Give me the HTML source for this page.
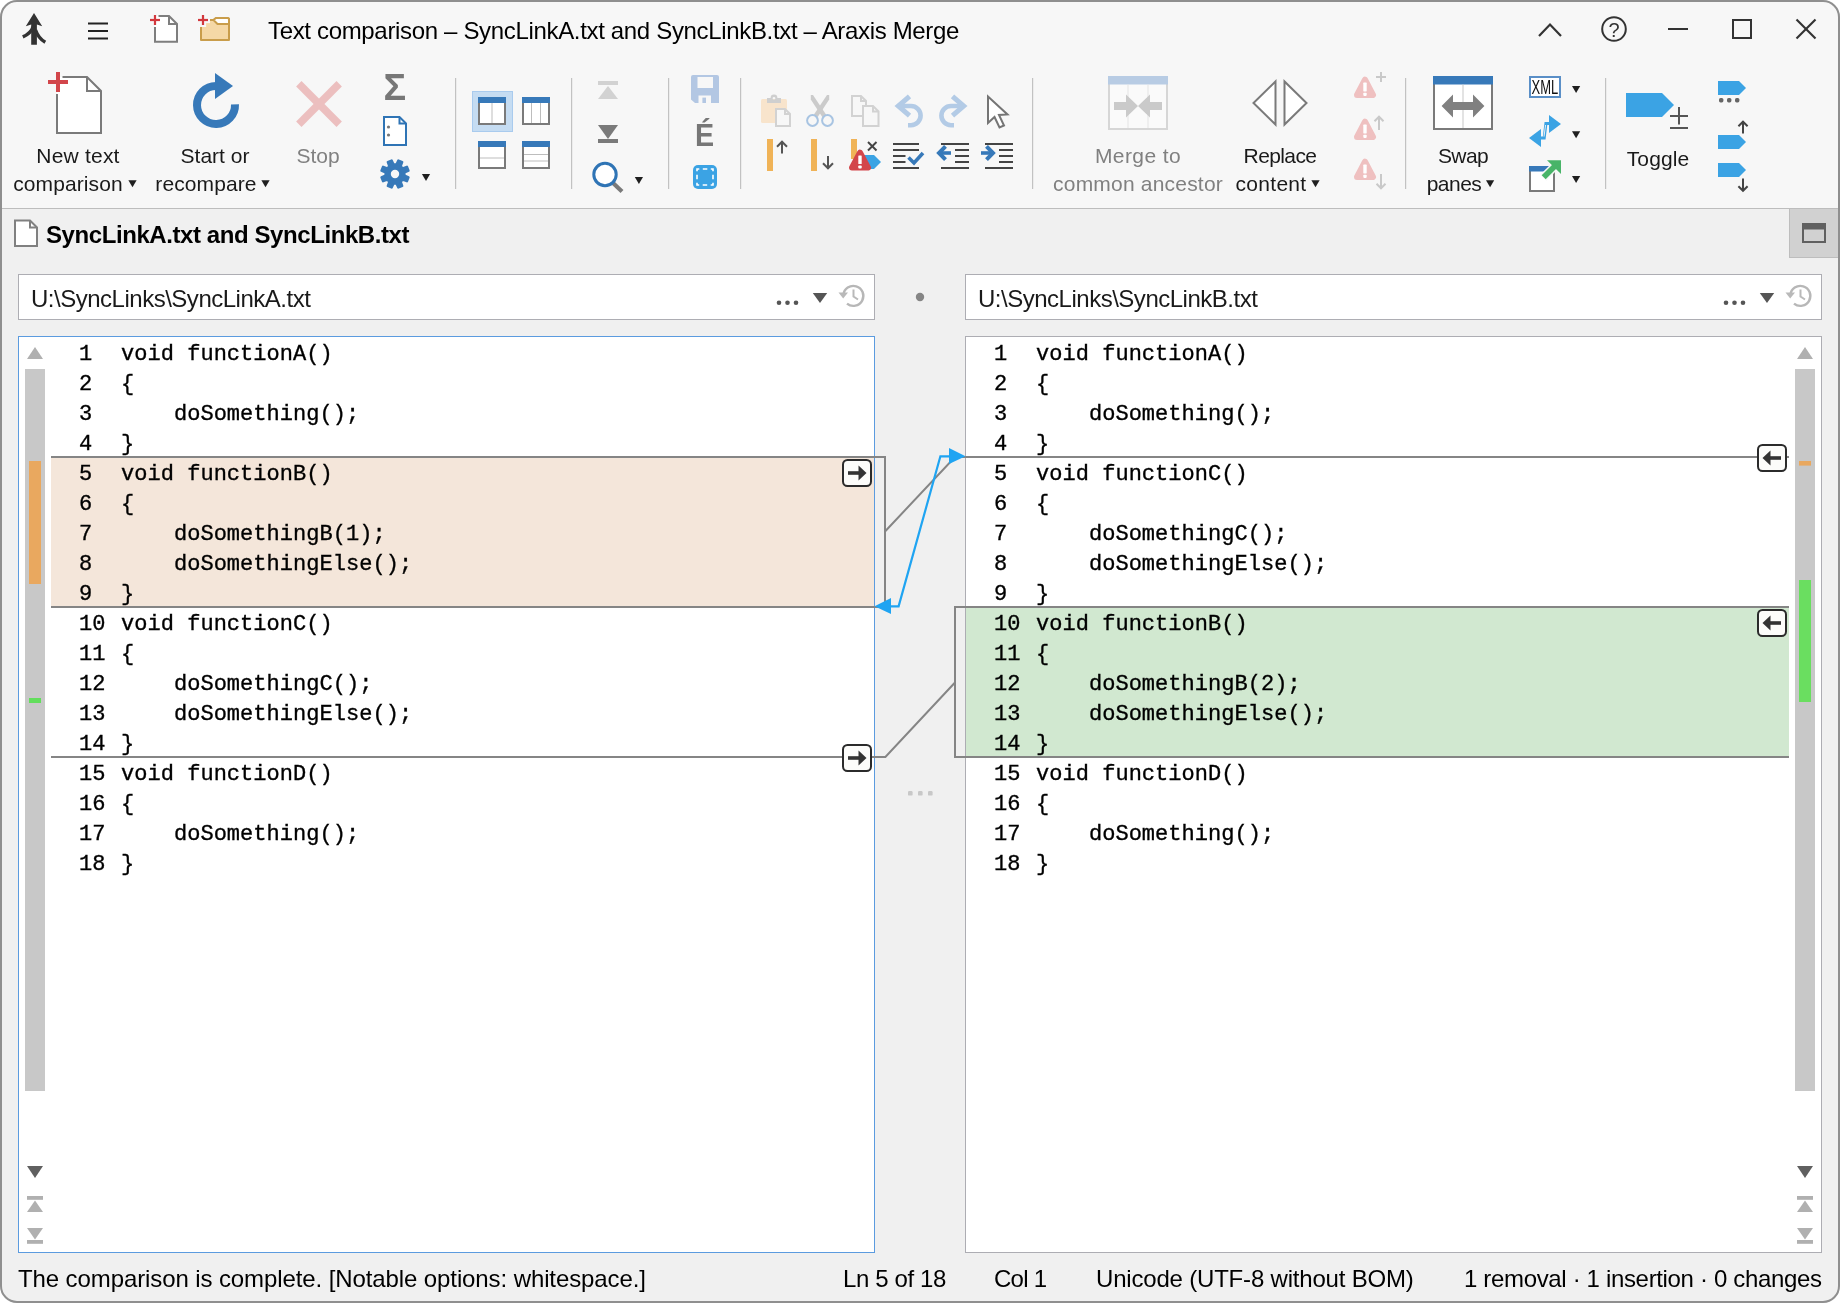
<!DOCTYPE html>
<html lang="en"><head><meta charset="utf-8"><title>Text comparison – SyncLinkA.txt and SyncLinkB.txt – Araxis Merge</title>
<style>
html,body{margin:0;padding:0;background:#fff;}
body{width:1840px;height:1303px;position:relative;overflow:hidden;font-family:"Liberation Sans", sans-serif;}
.a{position:absolute;}
.t{position:absolute;white-space:pre;font-family:"Liberation Sans", sans-serif;will-change:transform;}
.t.c{text-align:center;}
#top{left:0;top:0;width:1840px;height:208px;background:#f7f7f7;}
#topline{left:0;top:208px;width:1840px;height:1px;background:#bdbdbd;}
#main{left:0;top:209px;width:1840px;height:1094px;background:#f0f0f0;}
.path{background:#fff;border:1px solid #adadb3;box-sizing:border-box;height:46px;top:274px;width:857px;}
.pane{background:#fff;box-sizing:border-box;top:336px;width:857px;height:917px;overflow:hidden;}
#lp{left:18px;border:1px solid #5b9bdf;}
#rp{left:965px;border:1px solid #adadb3;}
.code{will-change:transform;position:absolute;font-family:"Liberation Mono", monospace;font-size:22px;line-height:30px;white-space:pre;color:#000;margin:0;letter-spacing:0.03px;-webkit-text-stroke:0.35px #000;}
.hl{position:absolute;height:148px;}
#frame{left:0;top:0;width:1840px;height:1303px;box-sizing:border-box;border:2px solid #8f8f8f;border-radius:17px;box-shadow:0 0 0 40px #fff;pointer-events:none;}
svg{position:absolute;left:0;top:0;overflow:visible;will-change:transform;}
svg text{font-family:"Liberation Sans", sans-serif;}
</style></head><body>

<div id="top" class="a"></div><div id="topline" class="a"></div><div id="main" class="a"></div>
<div class="t" style="left:268px;top:18.68px;font-size:24px;line-height:24px;letter-spacing:-0.333px;color:#000;font-weight:400;">Text comparison – SyncLinkA.txt and SyncLinkB.txt – Araxis Merge</div>
<div class="t c" style="left:-72px;width:300px;top:145.22px;font-size:21px;line-height:21px;letter-spacing:0.2px;color:#1a1a1a;">New text</div>
<div class="t c" style="left:-82px;width:300px;top:173.22px;font-size:21px;line-height:21px;letter-spacing:0.1px;color:#1a1a1a;">comparison</div>
<div class="t c" style="left:65px;width:300px;top:145.22px;font-size:21px;line-height:21px;letter-spacing:0px;color:#1a1a1a;">Start or</div>
<div class="t c" style="left:56px;width:300px;top:173.22px;font-size:21px;line-height:21px;letter-spacing:0.1px;color:#1a1a1a;">recompare</div>
<div class="t c" style="left:168px;width:300px;top:145.22px;font-size:21px;line-height:21px;letter-spacing:0px;color:#808080;">Stop</div>
<div class="t c" style="left:988px;width:300px;top:145.22px;font-size:21px;line-height:21px;letter-spacing:0.4px;color:#808080;">Merge to</div>
<div class="t c" style="left:988px;width:300px;top:173.22px;font-size:21px;line-height:21px;letter-spacing:0.2px;color:#808080;">common ancestor</div>
<div class="t c" style="left:1129.5px;width:300px;top:145.22px;font-size:21px;line-height:21px;letter-spacing:-0.6px;color:#1a1a1a;">Replace</div>
<div class="t c" style="left:1120.5px;width:300px;top:173.22px;font-size:21px;line-height:21px;letter-spacing:0.3px;color:#1a1a1a;">content</div>
<div class="t c" style="left:1312.5px;width:300px;top:145.22px;font-size:21px;line-height:21px;letter-spacing:-0.6px;color:#1a1a1a;">Swap</div>
<div class="t c" style="left:1303.5px;width:300px;top:173.22px;font-size:21px;line-height:21px;letter-spacing:-0.5px;color:#1a1a1a;">panes</div>
<div class="t c" style="left:1508px;width:300px;top:148.22px;font-size:21px;line-height:21px;letter-spacing:0.1px;color:#1a1a1a;">Toggle</div>
<div class="a" style="left:1789px;top:209px;width:49px;height:49px;background:#d1d1d1;border-left:1px solid #bdbdbd;border-bottom:1px solid #bdbdbd;box-sizing:border-box"></div>
<div class="t" style="left:46px;top:222.68px;font-size:24px;line-height:24px;letter-spacing:-0.42px;color:#000;font-weight:700;">SyncLinkA.txt and SyncLinkB.txt</div>
<div class="a path" style="left:18px"></div><div class="a path" style="left:965px"></div>
<div class="t" style="left:31px;top:286.68px;font-size:24px;line-height:24px;letter-spacing:-0.49px;color:#1a1a1a;font-weight:400;">U:\SyncLinks\SyncLinkA.txt</div>
<div class="t" style="left:978px;top:286.68px;font-size:24px;line-height:24px;letter-spacing:-0.49px;color:#1a1a1a;font-weight:400;">U:\SyncLinks\SyncLinkB.txt</div>
<div id="lp" class="a pane"><div class="hl" style="left:32px;width:824px;top:121px;background:#f4e6da"></div><pre class="code" style="left:60.2px;top:3.3999999999999773px">1
2
3
4
5
6
7
8
9
10
11
12
13
14
15
16
17
18</pre><pre class="code" style="left:102.30000000000001px;top:3.3999999999999773px">void functionA()
{
    doSomething();
}
void functionB()
{
    doSomethingB(1);
    doSomethingElse();
}
void functionC()
{
    doSomethingC();
    doSomethingElse();
}
void functionD()
{
    doSomething();
}</pre></div>
<div id="rp" class="a pane"><div class="hl" style="left:0px;width:823px;top:271px;background:#d1e8d0"></div><pre class="code" style="left:28.200000000000045px;top:3.3999999999999773px">1
2
3
4
5
6
7
8
9
10
11
12
13
14
15
16
17
18</pre><pre class="code" style="left:70.29999999999995px;top:3.3999999999999773px">void functionA()
{
    doSomething();
}
void functionC()
{
    doSomethingC();
    doSomethingElse();
}
void functionB()
{
    doSomethingB(2);
    doSomethingElse();
}
void functionD()
{
    doSomething();
}</pre></div>
<div class="t" style="left:18px;top:1266.68px;font-size:24px;line-height:24px;letter-spacing:-0.1px;color:#000;font-weight:400;">The comparison is complete. [Notable options: whitespace.]</div>
<div class="t" style="left:843px;top:1266.68px;font-size:24px;line-height:24px;letter-spacing:-0.38px;color:#000;font-weight:400;">Ln 5 of 18</div>
<div class="t" style="left:994px;top:1266.68px;font-size:24px;line-height:24px;letter-spacing:-0.76px;color:#000;font-weight:400;">Col 1</div>
<div class="t" style="left:1096px;top:1266.68px;font-size:24px;line-height:24px;letter-spacing:-0.19px;color:#000;font-weight:400;">Unicode (UTF-8 without BOM)</div>
<div class="t" style="left:1464px;top:1266.68px;font-size:24px;line-height:24px;letter-spacing:-0.34px;color:#000;font-weight:400;">1 removal · 1 insertion · 0 changes</div>
<svg width="1840" height="1303" viewBox="0 0 1840 1303">
<rect x="25" y="369" width="20" height="722" fill="#c8c8c8" />
<polygon points="27,359 43,359 35,347" fill="#b0b0b0" />
<polygon points="27,1166 43,1166 35,1178" fill="#606060" />
<rect x="27" y="1196" width="16" height="3.8" fill="#b0b0b0" />
<polygon points="27,1212 43,1212 35,1200.5" fill="#b0b0b0" />
<polygon points="27,1228 43,1228 35,1239.5" fill="#b0b0b0" />
<rect x="27" y="1240" width="16" height="3.8" fill="#b0b0b0" />
<rect x="1795" y="369" width="20" height="722" fill="#c8c8c8" />
<polygon points="1797,359 1813,359 1805,347" fill="#b0b0b0" />
<polygon points="1797,1166 1813,1166 1805,1178" fill="#606060" />
<rect x="1797" y="1196" width="16" height="3.8" fill="#b0b0b0" />
<polygon points="1797,1212 1813,1212 1805,1200.5" fill="#b0b0b0" />
<polygon points="1797,1228 1813,1228 1805,1239.5" fill="#b0b0b0" />
<rect x="1797" y="1240" width="16" height="3.8" fill="#b0b0b0" />
<rect x="29" y="461" width="12" height="123" fill="#e9a85f" />
<rect x="29" y="698" width="12" height="5" fill="#62de5c" />
<rect x="1799" y="461" width="12" height="4.6" fill="#e9a85f" />
<rect x="1799" y="580" width="12" height="122" fill="#6ade60" />
<path d="M51,457 H885 V607 H51" fill="none" stroke="#858585" stroke-width="2" />
<path d="M51,757 H885.4 L955,682.5" fill="none" stroke="#858585" stroke-width="2" />
<path d="M1789,607 H955 V757 H1789" fill="none" stroke="#858585" stroke-width="2" />
<path d="M1789,457 H955 L885,531.5" fill="none" stroke="#858585" stroke-width="2" />
<polyline points="950,456.3 940.4,456.3 898.6,606.3 890,606.3" fill="none" stroke="#1fa4f2" stroke-width="2.2" />
<polygon points="965.5,456.3 949,448 949,464" fill="#1fa4f2" />
<polygon points="874.6,606.3 891,598 891,614" fill="#1fa4f2" />
<rect x="843" y="460" width="28" height="26" fill="#fcfcfa" stroke="#2b2b2b" stroke-width="2" rx="4.5" /><rect x="848" y="471.2" width="12" height="3.6" fill="#333" /><polygon points="866.5,473 858.5,465.5 858.5,480.5" fill="#333" />
<rect x="843" y="745" width="28" height="26" fill="#fcfcfa" stroke="#2b2b2b" stroke-width="2" rx="4.5" /><rect x="848" y="756.2" width="12" height="3.6" fill="#333" /><polygon points="866.5,758 858.5,750.5 858.5,765.5" fill="#333" />
<rect x="1758" y="445" width="28" height="26" fill="#fcfcfa" stroke="#2b2b2b" stroke-width="2" rx="4.5" /><rect x="1769" y="456.2" width="12" height="3.6" fill="#333" /><polygon points="1762.5,458 1770.5,450.5 1770.5,465.5" fill="#333" />
<rect x="1758" y="610" width="28" height="26" fill="#fcfcfa" stroke="#2b2b2b" stroke-width="2" rx="4.5" /><rect x="1769" y="621.2" width="12" height="3.6" fill="#333" /><polygon points="1762.5,623 1770.5,615.5 1770.5,630.5" fill="#333" />
<rect x="908" y="791" width="4.6" height="4.6" fill="#c8c8c8" rx="1.2" />
<rect x="918" y="791" width="4.6" height="4.6" fill="#c8c8c8" rx="1.2" />
<rect x="928" y="791" width="4.6" height="4.6" fill="#c8c8c8" rx="1.2" />
</svg>
<svg width="1840" height="260" viewBox="0 0 1840 260">
<polygon points="34,13 42.2,26.2 36.9,24.6 36.9,44.7 31.2,44.7 31.2,24.6 25.8,26.2" fill="#333" />
<path d="M33.5,26 Q31,33.5 22.8,36.9" fill="none" stroke="#333" stroke-width="3.5" />
<path d="M35.5,30 Q38.5,38.5 45.3,42.3" fill="none" stroke="#333" stroke-width="3.5" />
<rect x="88" y="22.5" width="20" height="2" fill="#222" />
<rect x="88" y="30" width="20" height="2" fill="#222" />
<rect x="88" y="37.5" width="20" height="2" fill="#222" />
<path d="M155,16H169L177,24V41.8H155Z" fill="#fff" /><path d="M158.5,16H169L177,24V41.8H155V27" fill="none" stroke="#7e7e7e" stroke-width="2" /><path d="M169,16V24H177" fill="none" stroke="#7e7e7e" stroke-width="2" />
<rect x="150" y="18.9" width="10" height="2.2" fill="#d2383d" /><rect x="153.9" y="15" width="2.2" height="10" fill="#d2383d" />
<path d="M201,20 H213.5 L216,18 H227.5 Q229,18 229,19.5 V40 H201Z" fill="#f5d8a6" stroke="#c99d4b" stroke-width="2" stroke-linejoin="round"/>
<path d="M213.5,20 L217.5,24 H229 V19.5 Q229,18 227.5,18 H216Z" fill="#fff" stroke="#c99d4b" stroke-width="2" stroke-linejoin="round"/>
<rect x="196" y="16.9" width="14" height="6.2" fill="#f7f7f7" /><rect x="199.9" y="13" width="6.2" height="14" fill="#f7f7f7" />
<rect x="198" y="18.9" width="10" height="2.2" fill="#d2383d" /><rect x="201.9" y="15" width="2.2" height="10" fill="#d2383d" />
<polyline points="1539,36 1550,24.5 1561,36" fill="none" stroke="#333" stroke-width="2.2" />
<circle cx="1614" cy="29" r="11.8" fill="none" stroke="#333" stroke-width="2"/>
<text x="1614" y="37" font-size="20" text-anchor="middle" fill="#333">?</text>
<rect x="1668" y="28" width="20" height="2" fill="#333" />
<rect x="1733" y="20" width="18" height="18" fill="none" stroke="#333" stroke-width="2" />
<line x1="1796.5" y1="19.5" x2="1815.5" y2="38.5" stroke="#333" stroke-width="2.2" />
<line x1="1815.5" y1="19.5" x2="1796.5" y2="38.5" stroke="#333" stroke-width="2.2" />
<path d="M57,77H87L101,91V133H57Z" fill="#fff" /><path d="M62.5,77H87L101,91V133H57V94" fill="none" stroke="#7a7a7a" stroke-width="2" /><path d="M87,77V91H101" fill="none" stroke="#7a7a7a" stroke-width="2" />
<rect x="48" y="80" width="20" height="4" fill="#d2464b" /><rect x="56" y="72" width="4" height="20" fill="#d2464b" />
<polygon points="128.4,180.3 136.6,180.3 132.5,187.3" fill="#1f1f1f" />
<path d="M235,104.3 A19,19 0 1 1 216,86" fill="none" stroke="#3779b9" stroke-width="8" />
<polygon points="215,73 233,86 215,99" fill="#3779b9" />
<polygon points="261.4,180.3 269.6,180.3 265.5,187.3" fill="#1f1f1f" />
<line x1="298.8" y1="83.8" x2="339.2" y2="124.2" stroke="#ecbfbf" stroke-width="7.6" />
<line x1="339.2" y1="83.8" x2="298.8" y2="124.2" stroke="#ecbfbf" stroke-width="7.6" />
<text x="383.4" y="100" font-size="37.7" font-weight="700" fill="#777">Σ</text>
<path d="M384,117H399.5L406,123.5V145H384Z" fill="#fff" stroke="#2f74b5" stroke-width="2" stroke-linejoin="miter"/><path d="M399.5,117V123.5H406" fill="none" stroke="#2f74b5" stroke-width="2" />
<circle cx="388.5" cy="127" r="1.6" fill="#777"/>
<circle cx="388.5" cy="135" r="1.6" fill="#777"/>
<path d="M404.48,175.5 L408.49,177.35 L406.91,181.17 L402.77,179.64 L400.64,181.77 L402.17,185.91 L398.35,187.49 L396.5,183.48 L393.5,183.48 L391.65,187.49 L387.83,185.91 L389.36,181.77 L387.23,179.64 L383.09,181.17 L381.51,177.35 L385.52,175.5 L385.52,172.5 L381.51,170.65 L383.09,166.83 L387.23,168.36 L389.36,166.23 L387.83,162.09 L391.65,160.51 L393.5,164.52 L396.5,164.52 L398.35,160.51 L402.17,162.09 L400.64,166.23 L402.77,168.36 L406.91,166.83 L408.49,170.65 L404.48,172.5Z M400.4,174 A5.4,5.4 0 1 0 389.6,174 A5.4,5.4 0 1 0 400.4,174Z" fill="#3779b9" stroke="#3779b9" stroke-width="2.4" fill-rule="evenodd" stroke-linejoin="round"/>
<polygon points="421.9,174 430.1,174 426,181" fill="#1f1f1f" />
<rect x="455" y="78" width="1.2" height="111" fill="#c2c2c2" />
<rect x="571" y="78" width="1.2" height="111" fill="#c2c2c2" />
<rect x="668" y="78" width="1.2" height="111" fill="#c2c2c2" />
<rect x="740" y="78" width="1.2" height="111" fill="#c2c2c2" />
<rect x="1032" y="78" width="1.2" height="111" fill="#c2c2c2" />
<rect x="1405" y="78" width="1.2" height="111" fill="#c2c2c2" />
<rect x="1605" y="78" width="1.2" height="111" fill="#c2c2c2" />
<rect x="472.5" y="91.5" width="40" height="40" fill="#c5dcf2" stroke="#a9cbee" stroke-width="1" />
<rect x="479" y="98" width="26" height="26" fill="#fff" stroke="#7a7a7a" stroke-width="2" /><rect x="478" y="97" width="28" height="6" fill="#3779b9" />
<rect x="523" y="98" width="26" height="26" fill="#fff" stroke="#7a7a7a" stroke-width="2" /><rect x="522" y="97" width="28" height="6" fill="#3779b9" />
<rect x="479" y="142" width="26" height="26" fill="#fff" stroke="#7a7a7a" stroke-width="2" /><rect x="478" y="141" width="28" height="6" fill="#3779b9" />
<rect x="523" y="142" width="26" height="26" fill="#fff" stroke="#7a7a7a" stroke-width="2" /><rect x="522" y="141" width="28" height="6" fill="#3779b9" />
<rect x="491.5" y="103" width="1" height="20" fill="#bdbdbd" />
<rect x="531" y="103" width="1" height="20" fill="#bdbdbd" />
<rect x="540" y="103" width="1" height="20" fill="#bdbdbd" />
<rect x="480" y="157.5" width="24" height="1" fill="#bdbdbd" />
<rect x="524" y="154" width="24" height="1" fill="#bdbdbd" />
<rect x="524" y="160.5" width="24" height="1" fill="#bdbdbd" />
<rect x="598" y="81" width="20" height="4" fill="#d2d2d2" />
<polygon points="598,99 618,99 608,86" fill="#d2d2d2" />
<polygon points="598,125 618,125 608,139" fill="#7a7a7a" />
<rect x="598" y="139" width="20" height="4" fill="#7a7a7a" />
<line x1="612.5" y1="182.5" x2="622" y2="191.5" stroke="#7a7a7a" stroke-width="4.2" />
<circle cx="605" cy="174.5" r="11.2" fill="#fff" stroke="#2f74b5" stroke-width="3"/>
<polygon points="634.8,177 643,177 638.9,184" fill="#1f1f1f" />
<path d="M693,75 H717 Q719,75 719,77 V103 H695 L691,99.5 V77 Q691,75 693,75Z" fill="#b3c7e3" />
<rect x="697.5" y="77" width="15.5" height="11" fill="#f7f7f7" />
<rect x="698.5" y="95.5" width="12.5" height="7.5" fill="#f7f7f7" />
<rect x="702.4" y="97.6" width="3.6" height="5.4" fill="#b3c7e3" />
<text transform="translate(695 146.4) scale(0.93 1)" font-size="30.8" font-weight="700" fill="#777">É</text>
<rect x="693" y="165" width="24" height="24" fill="#3ba3e4" rx="5" />
<rect x="697" y="169" width="16" height="16" fill="none" stroke="#fff" stroke-width="1.6" stroke-dasharray="4.5 3.5" stroke-dashoffset="2.2"/>
<rect x="761" y="99" width="26" height="24" fill="#f8e4cc" rx="1.5" />
<path d="M767,103 V98 H770.6 A3.4,3.4 0 0 1 777.4,98 H781 V103Z M772.6,98.3 A1.4,1.4 0 1 0 775.4,98.3 A1.4,1.4 0 1 0 772.6,98.3Z" fill="#cfcfcf" fill-rule="evenodd"/>
<path d="M776,109H785L790,114V126H776Z" fill="#f7f7f7" stroke="#d2d2d2" stroke-width="2" stroke-linejoin="miter"/><path d="M785,109V114H790" fill="none" stroke="#d2d2d2" stroke-width="2" />
<polygon points="810.8,95 813,95 826.2,114.8 822.6,117.4 810.8,99.5" fill="#cbcbcb" />
<polygon points="829.2,95 827,95 813.8,114.8 817.4,117.4 829.2,99.5" fill="#cbcbcb" />
<circle cx="812.5" cy="120.5" r="5.4" fill="none" stroke="#a8c4e2" stroke-width="2"/>
<circle cx="827.5" cy="120.5" r="5.4" fill="none" stroke="#a8c4e2" stroke-width="2"/>
<path d="M852,96H861L866,101V116H852Z" fill="#f7f7f7" stroke="#d2d2d2" stroke-width="2" stroke-linejoin="miter"/><path d="M861,96V101H866" fill="none" stroke="#d2d2d2" stroke-width="2" />
<path d="M863,106H873L878.5,111.5V126H863Z" fill="#f7f7f7" stroke="#d2d2d2" stroke-width="2" stroke-linejoin="miter"/><path d="M873,106V111.5H878.5" fill="none" stroke="#d2d2d2" stroke-width="2" />
<polyline points="909.5,96.3 898.3,106 909.5,115.7" fill="none" stroke="#b3cbe6" stroke-width="5" />
<path d="M899,106 H911 A9.6,9.6 0 0 1 911,125.2 H908" fill="none" stroke="#b3cbe6" stroke-width="4.6" />
<polyline points="952.5,96.3 963.7,106 952.5,115.7" fill="none" stroke="#b3cbe6" stroke-width="5" />
<path d="M963,106 H951 A9.6,9.6 0 0 0 951,125.2 H954" fill="none" stroke="#b3cbe6" stroke-width="4.6" />
<polygon points="988,96.5 988,123 994.5,117 999.5,127.5 1004,125.5 999,115 1007.5,114.5" fill="#fff" stroke="#757575" stroke-width="2" stroke-linejoin="miter"/>
<rect x="767" y="139" width="6" height="32" fill="#f0b357" />
<line x1="782" y1="141.5" x2="782" y2="153.5" stroke="#555" stroke-width="2" /><polyline points="777,146.7 782,141.7 787,146.7" fill="none" stroke="#555" stroke-width="2" />
<rect x="811" y="139" width="6" height="32" fill="#f0b357" />
<line x1="828" y1="156" x2="828" y2="168.5" stroke="#555" stroke-width="2" /><polyline points="823,163.3 828,168.3 833,163.3" fill="none" stroke="#555" stroke-width="2" />
<rect x="851" y="139" width="6" height="20" fill="#f0b357" />
<polygon points="864,155 874,155 881,162 874,169 864,169" fill="#3ba3e4" />
<polygon points="860,152.6 868,167.6 852,167.6" fill="#d3454a" stroke="#d3454a" stroke-width="6.0" stroke-linejoin="round"/><rect x="858.3" y="155.48" width="3.4" height="8.64" fill="#fff" rx="0.6" /><rect x="858.3" y="165.42" width="3.4" height="3.2" fill="#fff" rx="0.8" />
<line x1="868" y1="142" x2="876.5" y2="150.5" stroke="#444" stroke-width="2" />
<line x1="876.5" y1="142" x2="868" y2="150.5" stroke="#444" stroke-width="2" />
<rect x="893" y="143" width="26" height="2" fill="#444" />
<rect x="941" y="143" width="28" height="2" fill="#444" />
<rect x="985" y="143" width="28" height="2" fill="#444" />
<rect x="893" y="149" width="26" height="2" fill="#444" />
<rect x="955" y="149" width="14" height="2" fill="#444" />
<rect x="999" y="149" width="14" height="2" fill="#444" />
<rect x="893" y="155" width="12.5" height="2" fill="#444" />
<rect x="955" y="155" width="14" height="2" fill="#444" />
<rect x="999" y="155" width="14" height="2" fill="#444" />
<rect x="893" y="161" width="12.5" height="2" fill="#444" />
<rect x="955" y="161" width="14" height="2" fill="#444" />
<rect x="999" y="161" width="14" height="2" fill="#444" />
<rect x="893" y="167" width="26" height="2" fill="#444" />
<rect x="941" y="167" width="28" height="2" fill="#444" />
<rect x="985" y="167" width="28" height="2" fill="#444" />
<polyline points="908.5,157.5 914,163 923,153" fill="none" stroke="#3779b9" stroke-width="3.6" />
<line x1="940" y1="153" x2="951" y2="153" stroke="#3779b9" stroke-width="3.6" />
<polyline points="945.5,146.3 939,153 945.5,159.7" fill="none" stroke="#3779b9" stroke-width="4" />
<line x1="981" y1="153" x2="992" y2="153" stroke="#3779b9" stroke-width="3.6" />
<polyline points="986.5,146.3 993,153 986.5,159.7" fill="none" stroke="#3779b9" stroke-width="4" />
<rect x="1109" y="77" width="58" height="52" fill="#fafafa" stroke="#d6d6d6" stroke-width="2" />
<rect x="1108" y="76" width="60" height="8.5" fill="#b8cce4" />
<rect x="1127.5" y="84.5" width="1" height="43.5" fill="#e3e3e3" />
<rect x="1147.5" y="84.5" width="1" height="43.5" fill="#e3e3e3" />
<polygon points="1114,102 1126,102 1126,94.5 1138,106 1126,117.5 1126,110 1114,110" fill="#cacaca" />
<polygon points="1162,102 1150,102 1150,94.5 1138,106 1150,117.5 1150,110 1162,110" fill="#cacaca" />
<polygon points="1275.5,81.5 1275.5,124.5 1253.5,103" fill="#fff" stroke="#7a7a7a" stroke-width="2" />
<polygon points="1284.5,81.5 1284.5,124.5 1306.5,103" fill="#fff" stroke="#7a7a7a" stroke-width="2" />
<polygon points="1311.4,180.3 1319.6,180.3 1315.5,187.3" fill="#1f1f1f" />
<polygon points="1365,79.6 1373,95 1357,95" fill="#efc0c0" stroke="#efc0c0" stroke-width="6.0" stroke-linejoin="round"/><rect x="1363.3" y="82.6" width="3.4" height="8.8" fill="#fff" rx="0.6" /><rect x="1363.3" y="92.72" width="3.4" height="3.2" fill="#fff" rx="0.8" />
<line x1="1376" y1="77" x2="1386" y2="77" stroke="#c9c9c9" stroke-width="2" />
<line x1="1381" y1="72" x2="1381" y2="82" stroke="#c9c9c9" stroke-width="2" />
<polygon points="1365,121.6 1373,137 1357,137" fill="#efc0c0" stroke="#efc0c0" stroke-width="6.0" stroke-linejoin="round"/><rect x="1363.3" y="124.6" width="3.4" height="8.8" fill="#fff" rx="0.6" /><rect x="1363.3" y="134.72" width="3.4" height="3.2" fill="#fff" rx="0.8" />
<line x1="1379" y1="116.5" x2="1379" y2="130" stroke="#c9c9c9" stroke-width="2" /><polyline points="1374.5,121.2 1379,116.7 1383.5,121.2" fill="none" stroke="#c9c9c9" stroke-width="2" />
<polygon points="1365,161.6 1373,177 1357,177" fill="#efc0c0" stroke="#efc0c0" stroke-width="6.0" stroke-linejoin="round"/><rect x="1363.3" y="164.6" width="3.4" height="8.8" fill="#fff" rx="0.6" /><rect x="1363.3" y="174.72" width="3.4" height="3.2" fill="#fff" rx="0.8" />
<line x1="1381" y1="174" x2="1381" y2="188.5" stroke="#c9c9c9" stroke-width="2" /><polyline points="1376.5,183.8 1381,188.3 1385.5,183.8" fill="none" stroke="#c9c9c9" stroke-width="2" />
<rect x="1434" y="77" width="58" height="52" fill="#fff" stroke="#7a7a7a" stroke-width="2" /><rect x="1433" y="76" width="60" height="8.5" fill="#3779b9" />
<rect x="1462.5" y="84.5" width="1" height="43.5" fill="#c8c8c8" />
<polygon points="1441.6,106 1453,94.5 1453,102 1473,102 1473,94.5 1484.4,106 1473,117.5 1473,110 1453,110 1453,117.5" fill="#808080" />
<polygon points="1486,180.3 1494.2,180.3 1490.1,187.3" fill="#1f1f1f" />
<rect x="1530" y="77" width="30" height="20" fill="#fff" stroke="#5a8fc7" stroke-width="2" />
<text transform="translate(1531.6 94) scale(0.65 1)" font-size="20" fill="#111">XML</text>
<polygon points="1572,86 1580.2,86 1576.1,93" fill="#1f1f1f" />
<polygon points="1549,115 1561,124 1549,133" fill="#3ba3e4" />
<polygon points="1541,129 1529,138 1541,147" fill="#3ba3e4" />
<polyline points="1540,138 1544.2,138 1545.9,123.6 1550,123.6" fill="none" stroke="#3ba3e4" stroke-width="3.0" />
<polyline points="1544,136.6 1545.6,125" fill="none" stroke="#f7f7f7" stroke-width="0.9" />
<polygon points="1572,131.2 1580.2,131.2 1576.1,138.2" fill="#1f1f1f" />
<rect x="1530" y="167" width="24" height="24" fill="#fff" stroke="#7a7a7a" stroke-width="2" /><rect x="1529" y="166" width="26" height="5.5" fill="#3779b9" />
<line x1="1543.4" y1="177.6" x2="1555" y2="166" stroke="#f7f7f7" stroke-width="8.6" />
<polygon points="1543.6,158.8 1562.4,158.8 1562.4,177.4" fill="#f7f7f7" />
<line x1="1543.7" y1="177.3" x2="1555" y2="166" stroke="#48b468" stroke-width="5.6" />
<polygon points="1547,160.2 1561,160.2 1561,174" fill="#48b468" />
<polygon points="1572,176 1580.2,176 1576.1,183" fill="#1f1f1f" />
<polygon points="1626,93 1662,93 1674,105 1662,117 1626,117" fill="#3ba3e4" />
<line x1="1670" y1="116" x2="1688" y2="116" stroke="#555" stroke-width="2" />
<line x1="1679" y1="107" x2="1679" y2="124.5" stroke="#555" stroke-width="2" />
<line x1="1670" y1="128" x2="1688" y2="128" stroke="#555" stroke-width="2" />
<polygon points="1718,81 1739,81 1746,88 1739,95 1718,95" fill="#3ba3e4" />
<rect x="1719" y="98" width="4.4" height="4.4" fill="#666" rx="1.6" />
<rect x="1727" y="98" width="4.4" height="4.4" fill="#666" rx="1.6" />
<rect x="1735" y="98" width="4.4" height="4.4" fill="#666" rx="1.6" />
<polygon points="1718,135 1739,135 1746,142 1739,149 1718,149" fill="#3ba3e4" />
<line x1="1743" y1="121.5" x2="1743" y2="133.5" stroke="#444" stroke-width="2" /><polyline points="1738.4,126.3 1743,121.7 1747.6,126.3" fill="none" stroke="#444" stroke-width="2" />
<polygon points="1718,163 1739,163 1746,170 1739,177 1718,177" fill="#3ba3e4" />
<line x1="1743" y1="178.5" x2="1743" y2="191" stroke="#444" stroke-width="2" /><polyline points="1738.4,186.2 1743,190.8 1747.6,186.2" fill="none" stroke="#444" stroke-width="2" />
<path d="M15,220.5H30L37,227.5V246H15Z" fill="#fff" stroke="#808080" stroke-width="2" stroke-linejoin="miter"/><path d="M30,220.5V227.5H37" fill="none" stroke="#808080" stroke-width="2" />
<rect x="1803" y="224" width="22" height="18" fill="none" stroke="#606060" stroke-width="2" />
<rect x="1802" y="223" width="24" height="6.5" fill="#606060" />
<circle cx="779" cy="302.8" r="2.3" fill="#555"/>
<circle cx="787.5" cy="302.8" r="2.3" fill="#555"/>
<circle cx="796" cy="302.8" r="2.3" fill="#555"/>
<polygon points="812.8,293 827.2,293 820,303" fill="#555" />
<path d="M843.4,295 A10,10 0 1 1 847,303.6" fill="none" stroke="#b7b7b7" stroke-width="2.4" />
<polygon points="838.5,292.5 848,292.5 843.2,298.5" fill="#b9b9b9" />
<polyline points="853.5,289.5 853.5,296.5 858,299.5" fill="none" stroke="#b9b9b9" stroke-width="2" />
<circle cx="1726" cy="302.8" r="2.3" fill="#555"/>
<circle cx="1734.5" cy="302.8" r="2.3" fill="#555"/>
<circle cx="1743" cy="302.8" r="2.3" fill="#555"/>
<polygon points="1759.8,293 1774.2,293 1767,303" fill="#555" />
<path d="M1790.4,295 A10,10 0 1 1 1794,303.6" fill="none" stroke="#b7b7b7" stroke-width="2.4" />
<polygon points="1785.5,292.5 1795,292.5 1790.2,298.5" fill="#b9b9b9" />
<polyline points="1800.5,289.5 1800.5,296.5 1805,299.5" fill="none" stroke="#b9b9b9" stroke-width="2" />
<circle cx="920" cy="297" r="4.2" fill="#858585"/>
</svg>
<div id="frame" class="a"></div>
</body></html>
